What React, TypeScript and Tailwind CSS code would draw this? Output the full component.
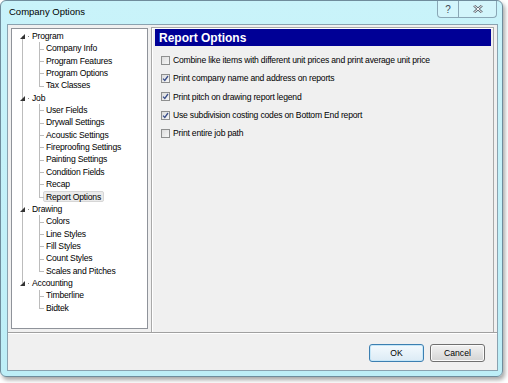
import React from "react";

const font = { fontFamily: '"Liberation Sans", Arial, sans-serif' };

type Group = { label: string; children: string[] };

const tree: Group[] = [
  { label: "Program", children: ["Company Info", "Program Features", "Program Options", "Tax Classes"] },
  {
    label: "Job",
    children: [
      "User Fields",
      "Drywall Settings",
      "Acoustic Settings",
      "Fireproofing Settings",
      "Painting Settings",
      "Condition Fields",
      "Recap",
      "Report Options",
    ],
  },
  { label: "Drawing", children: ["Colors", "Line Styles", "Fill Styles", "Count Styles", "Scales and Pitches"] },
  { label: "Accounting", children: ["Timberline", "Bidtek"] },
];

function RootRow({ label, first, last }: { label: string; first: boolean; last: boolean }) {
  return (
    <div className="relative flex h-[12.36px] items-center pl-[20px] text-[8.6px] leading-none tracking-[-0.2px] text-black">
      <span
        className={`absolute left-[10px] w-px bg-[#bcbcbc] ${first ? "top-1/2" : "top-0"} ${last ? "bottom-1/2" : "bottom-0"}`}
      />
      <svg className="absolute left-[8px] top-[4px]" width="5" height="5" viewBox="0 0 5 5">
        <polygon points="5,0 5,5 0,5" fill="#333" />
      </svg>
      <span className="absolute left-[16px] top-1/2 h-px w-px bg-[#8a8a8a]" />
      <span>{label}</span>
    </div>
  );
}

function ChildRow({
  label,
  lastChild,
  lastRoot,
  selected,
}: {
  label: string;
  lastChild: boolean;
  lastRoot: boolean;
  selected: boolean;
}) {
  return (
    <div className="relative flex h-[12.36px] items-center pl-[31px] text-[8.6px] leading-none tracking-[-0.2px] text-black">
      {!lastRoot && <span className="absolute bottom-0 left-[10px] top-0 w-px bg-[#bcbcbc]" />}
      <span className={`absolute left-[27px] top-0 w-px bg-[#bcbcbc] ${lastChild ? "bottom-1/2" : "bottom-0"}`} />
      <span className="absolute left-[27px] top-1/2 h-px w-[5px] bg-[#bcbcbc]" />
      <span
        className={`flex h-[11px] items-center rounded-[2px] border px-[2px] ${
          selected ? "border-[#d6d6d6] bg-[#ebebeb]" : "border-transparent"
        }`}
      >
        {label}
      </span>
    </div>
  );
}

function Checkbox({ checked }: { checked: boolean }) {
  return (
    <span className="flex h-[9px] w-[9px] shrink-0 items-center justify-center border border-[#8e8f8f] bg-gradient-to-br from-[#dcdcdc] to-[#f7f7f7]">
      {checked && (
        <svg width="7" height="7" viewBox="0 0 7 7">
          <path d="M1 3.6 L2.8 5.5 L6 1" stroke="#3b4f8a" strokeWidth="1.3" fill="none" />
        </svg>
      )}
    </span>
  );
}

const options: { label: string; checked: boolean }[] = [
  { label: "Combine like items with different unit prices and print average unit price", checked: false },
  { label: "Print company name and address on reports", checked: true },
  { label: "Print pitch on drawing report legend", checked: true },
  { label: "Use subdivision costing codes on Bottom End report", checked: true },
  { label: "Print entire job path", checked: false },
];

export default function App() {
  return (
    <div className="h-[383px] w-[508px] overflow-hidden bg-white" style={font}>
      <div className="relative h-[377px] w-[503px] rounded-[6px] border border-[#6f8c9c] bg-gradient-to-b from-[#c9f3fa] to-[#bdeef7] shadow-[2px_3px_4px_rgba(0,0,0,0.35)]">
        {/* title bar */}
        <div className="flex h-[23px] items-center pl-[8px] text-[9.5px] text-black">Company Options</div>
        {/* caption buttons */}
        <div className="absolute right-[5px] top-0 flex h-[17px]">
          <div className="flex w-[22px] items-center justify-center rounded-bl-[4px] border border-t-0 border-[#8aa7b6] bg-[#d3f5fb] text-[10px] text-[#3d4a55]">
            ?
          </div>
          <div className="flex w-[38px] items-center justify-center rounded-br-[4px] border border-l-0 border-t-0 border-[#8aa7b6] bg-[#d3f5fb]">
            <svg width="10" height="8" viewBox="0 0 10 8">
              <path d="M1 0.5 L9 7.5 M9 0.5 L1 7.5" stroke="#5b6670" strokeWidth="2.4" />
              <path d="M1 0.5 L9 7.5 M9 0.5 L1 7.5" stroke="#ffffff" strokeWidth="1" />
            </svg>
          </div>
        </div>

        {/* client area */}
        <div className="ml-[6px] flex h-[347px] w-[491px] flex-col border border-[#8aa2b0] bg-[#f0f0f0]">
          {/* top section */}
          <div className="flex h-[308px] border-b border-[#a0a0a0] shadow-[0_1px_0_#ffffff]">
            {/* tree */}
            <div className="ml-[3px] mt-[3px] h-[301px] w-[137px] border border-[#8f939a] bg-white pt-[1px]">
              {tree.map((g, gi) => (
                <React.Fragment key={g.label}>
                  <RootRow label={g.label} first={gi === 0} last={gi === tree.length - 1} />
                  {g.children.map((c, ci) => (
                    <ChildRow
                      key={c}
                      label={c}
                      lastChild={ci === g.children.length - 1}
                      lastRoot={gi === tree.length - 1}
                      selected={c === "Report Options"}
                    />
                  ))}
                </React.Fragment>
              ))}
            </div>
            {/* right panel */}
            <div className="ml-[3px] mt-[2px] flex w-[343px] flex-col border border-b-0 border-[#a9a9a9] pl-[3px] pr-[2px] pt-[1px] shadow-[inset_1px_1px_0_#ffffff]">
              <div className="flex h-[17px] items-center bg-[#000096] pl-[4px] text-[12px] font-bold leading-none text-white">
                Report Options
              </div>
              <div className="mt-[5px] flex flex-col">
                {options.map((o) => (
                  <div
                    key={o.label}
                    className="flex h-[18.4px] items-center gap-[3px] pl-[6px] text-[8.6px] leading-none tracking-[-0.2px] text-black"
                  >
                    <Checkbox checked={o.checked} />
                    <span>{o.label}</span>
                  </div>
                ))}
              </div>
            </div>
          </div>

          {/* bottom buttons */}
          <div className="flex flex-1 items-start justify-end gap-[6px] pr-[12px] pt-[11px]">
            <button className="flex h-[18px] w-[55px] items-center justify-center rounded-[3px] border border-[#3c7fb1] bg-gradient-to-b from-[#f4fafe] to-[#dcebf5] text-[8.6px] text-black shadow-[inset_0_0_0_1px_#c6e7f8]">
              OK
            </button>
            <button className="flex h-[18px] w-[55px] items-center justify-center rounded-[3px] border border-[#707070] bg-gradient-to-b from-[#f2f2f2] to-[#d4d4d4] text-[8.6px] text-black shadow-[inset_0_0_0_1px_#fbfbfb]">
              Cancel
            </button>
          </div>
        </div>
      </div>
    </div>
  );
}
